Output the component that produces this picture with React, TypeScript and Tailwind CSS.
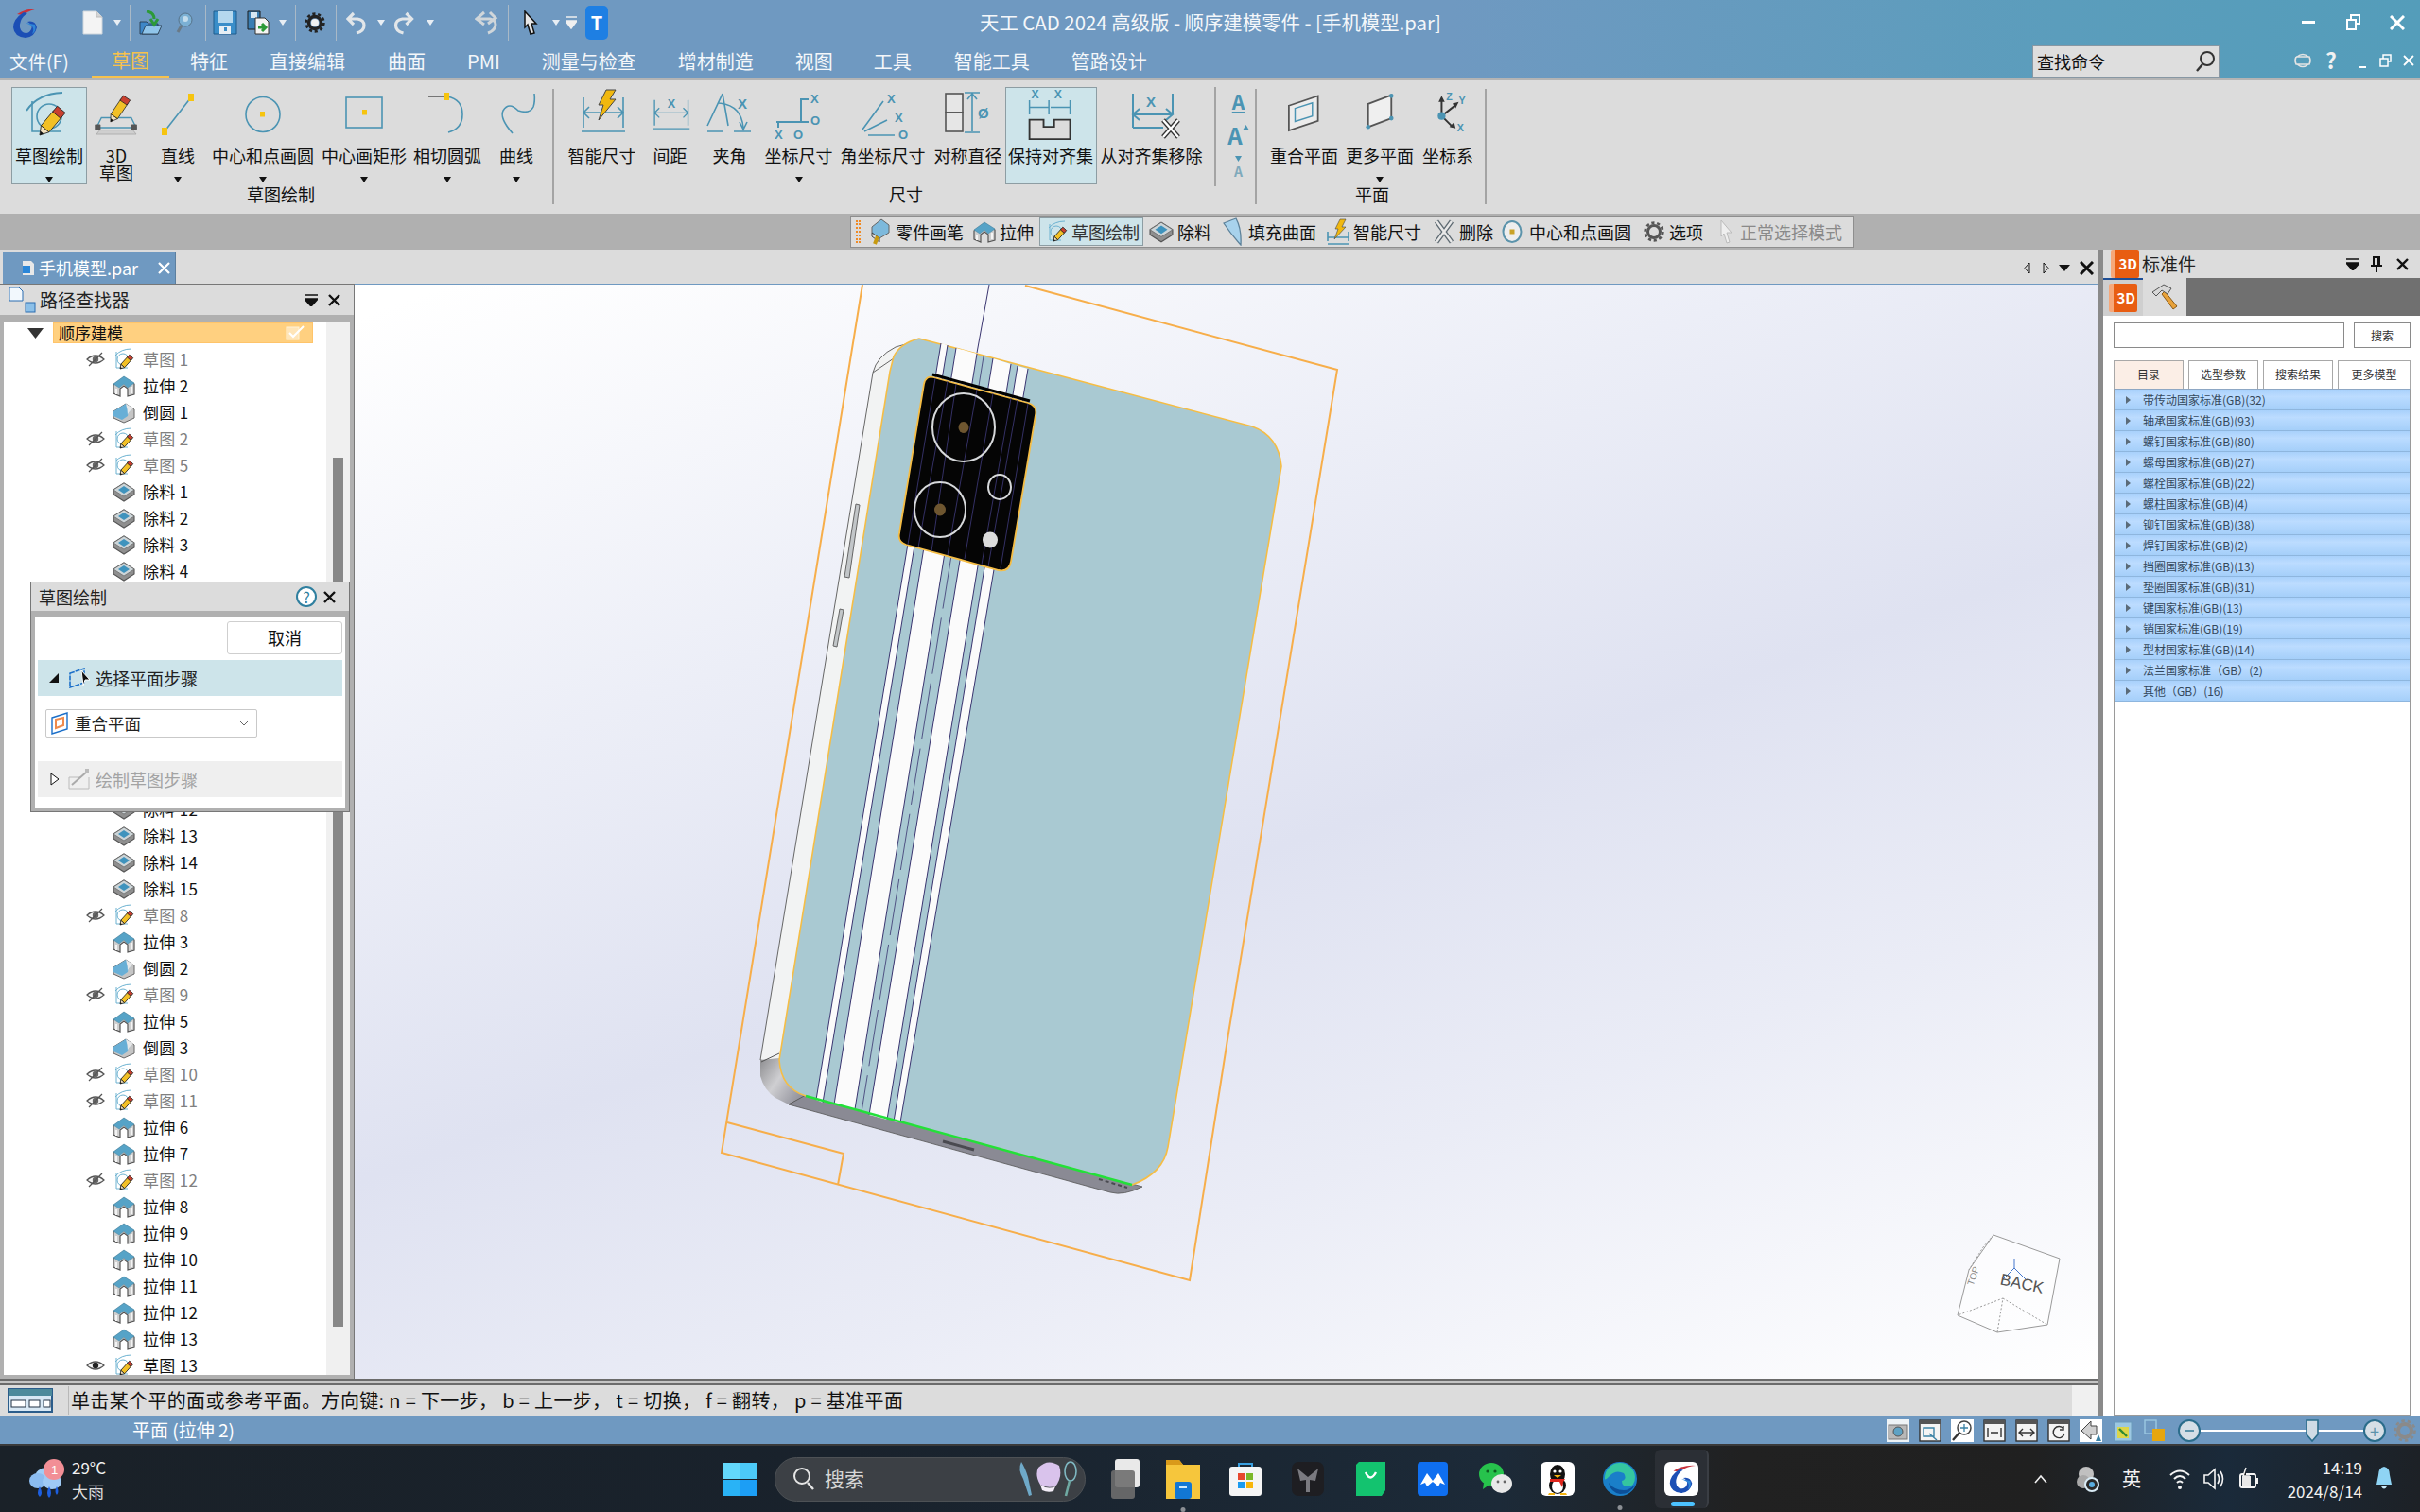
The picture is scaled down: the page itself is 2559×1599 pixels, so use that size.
import React from "react";

const B = "#4b94b3";
const Y = "#f6c40f";

function Pencil({ x, y, l = 26, w = 4, r = 38 }: { x: number; y: number; l?: number; w?: number; r?: number }) {
  return (
    <g transform={`translate(${x} ${y}) rotate(${r})`}>
      <polygon points={`0,0 ${-w},${-w * 1.6} ${w},${-w * 1.6}`} fill="#f3e2c0" stroke="#222" strokeWidth="0.8" />
      <polygon points={`0,0 ${-w * 0.4},${-w * 0.7} ${w * 0.4},${-w * 0.7}`} fill="#111" />
      <rect x={-w} y={-l} width={w * 2} height={l - w * 1.6} fill="#f2c026" stroke="#222" strokeWidth="0.8" />
      <rect x={-w} y={-l - w} width={w * 2} height={w * 1.4} fill="#c9402f" stroke="#222" strokeWidth="0.8" />
    </g>
  );
}

function ExtrudeIcon({ s = 24 }: { s?: number }) {
  return (
    <svg width={s} height={s} viewBox="0 0 24 24">
      <path d="M1 11 L12 3 L23 10 V21 L16 23 V15 L12 12 L8 15 V23 L1 20 Z" fill="#cfcfcf" stroke="#555" strokeWidth="1.2" />
      <path d="M1 10 L12 2 L23 9 L16 14 L12 10 L7 14 Z" fill="#56a3c7" stroke="#4f8aa5" strokeWidth="0.6" />
      <path d="M4 15 V21 M20 13 V20" stroke="#f4f4f4" strokeWidth="2" />
    </svg>
  );
}
function CutIcon({ s = 24 }: { s?: number }) {
  return (
    <svg width={s} height={s} viewBox="0 0 24 24">
      <path d="M1 10 L12 3 L23 10 V15 L12 22 L1 15 Z" fill="#8f8f8f" stroke="#555" strokeWidth="1.1" />
      <path d="M1 10 L12 3 L23 10 L12 17 Z" fill="#cdd5d8" stroke="#666" strokeWidth="0.7" />
      <path d="M6 10 L12 6 L18 10 L12 14 Z" fill="#3f93bd" />
    </svg>
  );
}
function RoundIcon({ s = 24 }: { s?: number }) {
  return (
    <svg width={s} height={s} viewBox="0 0 24 24">
      <path d="M1 11 L14 3 L23 9 V18 L12 23 L1 18 Z" fill="#c5c5c5" stroke="#666" strokeWidth="1" />
      <path d="M1 11 L14 3 L21 8 Q17 11 16 16 L10 20 L1 16 Z" fill="#68afd6" />
      <path d="M14 3 L22 8 Q17 11 16 15 Q16 9 14 3" fill="#e8e8e8" />
    </svg>
  );
}
function SketchMini({ s = 24 }: { s?: number }) {
  return (
    <svg width={s} height={s} viewBox="0 0 24 24">
      <path d="M3 8 Q9 1 20 1 M4 4 V21 H16" fill="none" stroke="#6cb2d1" strokeWidth="1" />
      <circle cx="11" cy="12" r="6" fill="none" stroke="#6cb2d1" strokeWidth="1" />
      <Pencil x={8} y={22} l={15} w={2.6} r={42} />
    </svg>
  );
}
function EyeIcon({ off = true }: { off?: boolean }) {
  return (
    <svg width="20" height="16" viewBox="0 0 20 16">
      <path d="M1 8 Q10 0 19 8 Q10 16 1 8 Z" fill="#f4f4f4" stroke="#555" strokeWidth="1.2" />
      <circle cx="10" cy="8" r="3.2" fill={off ? "#666" : "#222"} />
      {off && <path d="M3 15 L17 1" stroke="#555" strokeWidth="1.2" />}
    </svg>
  );
}
function AppLogo({ s = 34 }: { s?: number }) {
  return (
    <svg width={s} height={s} viewBox="0 0 34 34">
      <path d="M8 8 Q18 1 33 2 Q22 3 14 9 Z" fill="#c8323c" />
      <path d="M15 6 Q4 13 4 22 Q5 32 17 33 Q27 32 29 22 Q27 14 19 16 Q25 19 23 24 Q20 30 14 27 Q9 23 12 15 Q14 10 19 7 Z" fill="#1c4fb5" />
      <path d="M17 17 L27 19 Q29 26 24 29 Q27 23 23 20 Z" fill="#2f86d8" />
    </svg>
  );
}
function Caret({ dark = true }: { dark?: boolean }) {
  return (
    <svg width="8" height="6" viewBox="0 0 8 6">
      <path d="M0 0 H8 L4 6 Z" fill={dark ? "#111" : "#e8eef4"} />
    </svg>
  );
}

function RibbonIcon({ name }: { name: string }) {
  const t = { fill: B, fontSize: 13, fontFamily: "Liberation Sans, sans-serif", fontWeight: 700 } as const;
  const c = "0 0 64 56";
  const st = { fill: "none", stroke: B, strokeWidth: 1.6 } as const;
  switch (name) {
    case "sketch":
      return (
        <svg width="60" height="52" viewBox="0 0 60 52">
          <path d="M6 22 Q18 4 44 3" {...st} strokeWidth={2} fill="none" />
          <path d="M12 12 V44 H42" {...st} />
          <circle cx="30" cy="28" r="13" {...st} />
          <Pencil x={20} y={48} l={30} w={5.5} r={40} />
        </svg>
      );
    case "sketch3d":
      return (
        <svg width="56" height="50" viewBox={c}>
          <path d="M14 32 H50 L56 44 H8 Z" fill="none" stroke={B} strokeWidth="1.6" />
          <rect x="6" y="40" width="7" height="7" rx="1" fill="#555" />
          <rect x="50" y="40" width="7" height="7" rx="1" fill="#555" />
          <path d="M8 52 H56 L52 47 H12 Z" fill="#cfcfcf" stroke="#aaa" />
          <Pencil x={25} y={37} l={30} w={5} r={34} />
        </svg>
      );
    case "line":
      return (
        <svg width="60" height="56" viewBox="0 0 60 56">
          <path d="M16 46 L44 10" stroke={B} strokeWidth="1.6" />
          <rect x="13" y="42" width="6" height="8" fill={Y} />
          <rect x="41" y="6" width="6" height="8" fill={Y} />
        </svg>
      );
    case "circle":
      return (
        <svg width="50" height="50" viewBox="0 0 50 50">
          <ellipse cx="25" cy="25" rx="18" ry="18.5" {...st} />
          <rect x="22" y="22" width="5" height="5.5" fill={Y} />
        </svg>
      );
    case "rect":
      return (
        <svg width="50" height="50" viewBox="0 0 50 50">
          <rect x="6" y="7" width="38" height="32" {...st} />
          <rect x="23" y="20" width="5" height="5.5" fill={Y} />
        </svg>
      );
    case "arc":
      return (
        <svg width="60" height="56" viewBox="0 0 60 56">
          <path d="M10 9 H30" stroke="#555" strokeWidth="1.5" />
          <path d="M30 9 Q46 12 46 28 Q46 43 31 47" {...st} />
          <rect x="27" y="5" width="5" height="8" fill={Y} />
        </svg>
      );
    case "curve":
      return (
        <svg width="60" height="56" viewBox="0 0 60 56">
          <path d="M26 48 Q12 32 16 24 Q22 14 32 24 Q44 28 48 20 Q50 14 49 6" {...st} />
        </svg>
      );
    case "smart":
      return (
        <svg width="64" height="56" viewBox={c}>
          <path d="M12 10 V42 M54 10 V42 M10 46 H56" {...st} />
          <path d="M12 26 H54 M18 20 L12 26 L18 32 M48 20 L54 26 L48 32" {...st} />
          <path d="M36 2 H46 L40 12 H46 L28 34 L33 18 H28 Z" fill="#f1b80f" stroke="#444" strokeWidth="1" />
        </svg>
      );
    case "space":
      return (
        <svg width="64" height="56" viewBox={c}>
          <path d="M12 10 V42 M54 10 V42 M10 46 H56 M12 26 H54 M18 20 L12 26 L18 32 M48 20 L54 26 L48 32" {...st} />
          <text x="28" y="20" {...t} fontSize="15">X</text>
        </svg>
      );
    case "angle":
      return (
        <svg width="64" height="56" viewBox={c}>
          <path d="M8 40 L24 6 M24 6 L30 40 M8 46 H24 M36 46 H54 M20 16 Q44 18 46 42 M42 36 L46 44 L50 36" {...st} />
          <text x="40" y="22" {...t} fontSize="15">X</text>
        </svg>
      );
    case "ord":
      return (
        <svg width="64" height="56" viewBox={c}>
          <path d="M8 36 H34 M34 36 V12 H42 M10 36 V42 M34 36 H42" {...st} strokeWidth={2} />
          <text x="44" y="16" {...t}>X</text>
          <text x="44" y="39" {...t}>O</text>
          <text x="6" y="54" {...t}>X</text>
          <text x="26" y="54" {...t}>O</text>
        </svg>
      );
    case "aord":
      return (
        <svg width="64" height="56" viewBox={c}>
          <path d="M10 44 L32 14 M12 46 L36 34 M16 50 H44" {...st} />
          <text x="36" y="16" {...t}>X</text>
          <text x="44" y="36" {...t}>X</text>
          <text x="48" y="54" {...t}>O</text>
        </svg>
      );
    case "sym":
      return (
        <svg width="64" height="56" viewBox={c}>
          <rect x="8" y="6" width="18" height="20" fill="#e6e6e6" stroke="#555" strokeWidth="1.6" />
          <rect x="8" y="26" width="18" height="20" fill="#e6e6e6" stroke="#555" strokeWidth="1.6" />
          <path d="M28 5 H44 M28 47 H44 M36 6 V46 M31 12 L36 6 L41 12" {...st} />
          <text x="42" y="32" {...t} fontSize="15">Ø</text>
        </svg>
      );
    case "keep":
      return (
        <svg width="60" height="56" viewBox="0 0 64 60">
          <text x="10" y="12" {...t}>X</text>
          <text x="36" y="12" {...t}>X</text>
          <path d="M8 14 V30 M30 14 V30 M54 14 V30 M8 22 H30 M32 22 H54" {...st} />
          <path d="M8 36 H24 V44 H36 V36 H54 V58 H8 Z" fill="#dcdcdc" stroke="#333" strokeWidth="2" />
        </svg>
      );
    case "remove":
      return (
        <svg width="64" height="56" viewBox={c}>
          <path d="M12 6 V42 M54 6 V28 M12 28 H54 M19 22 L12 28 L19 34 M47 22 L54 28 L47 34 M12 42 H44" {...st} strokeWidth={2} />
          <text x="26" y="20" {...t} fontSize="15">X</text>
          <path d="M44 34 L60 52 M60 34 L44 52" stroke="#333" strokeWidth="5" />
          <path d="M44 34 L60 52 M60 34 L44 52" stroke="#fff" strokeWidth="2.4" />
        </svg>
      );
    case "plane":
      return (
        <svg width="44" height="41" viewBox="0 0 60 56">
          <path d="M8 16 L50 2 V38 L8 52 Z" fill="#ececec" stroke="#555" strokeWidth="2.4" />
          <path d="M17 20 L42 12 V31 L17 39 Z" fill="none" stroke={B} strokeWidth="2" />
        </svg>
      );
    case "more":
      return (
        <svg width="46" height="43" viewBox="0 0 60 56">
          <path d="M14 14 L46 2 V34 L14 46 Z" fill="#efefef" stroke="#555" strokeWidth="2.4" />
          <circle cx="46" cy="3" r="3" fill={B} />
          <circle cx="46" cy="34" r="3" fill={B} />
          <circle cx="14" cy="46" r="3" fill={B} />
        </svg>
      );
    case "coord":
      return (
        <svg width="50" height="46" viewBox="0 0 60 56">
          <path d="M22 30 V8 M22 30 L40 16 M22 30 L36 44" stroke="#333" strokeWidth="2.4" />
          <path d="M18 12 L22 4 L26 12 Z M36 14 L44 12 L40 20 Z M32 44 L40 46 L38 38 Z" fill="#333" />
          <circle cx="22" cy="30" r="5" fill={B} />
          <text x="28" y="10" {...t}>Z</text>
          <text x="44" y="14" {...t}>Y</text>
          <text x="42" y="50" {...t}>X</text>
        </svg>
      );
    default:
      return null;
  }
}

type RB = { n: string; l: React.ReactNode; w: string; a?: boolean; active?: boolean };

const g1: RB[] = [
  { n: "sketch", l: "草图绘制", w: "w-[80px]", a: true, active: true },
  { n: "sketch3d", l: <>3D<br />草图</>, w: "w-[62px]" },
  { n: "line", l: "直线", w: "w-[68px]", a: true },
  { n: "circle", l: "中心和点画圆", w: "w-[112px]", a: true },
  { n: "rect", l: "中心画矩形", w: "w-[102px]", a: true },
  { n: "arc", l: "相切圆弧", w: "w-[74px]", a: true },
  { n: "curve", l: "曲线", w: "w-[72px]", a: true },
];
const g2a: RB[] = [
  { n: "smart", l: "智能尺寸", w: "w-[90px]" },
  { n: "space", l: "间距", w: "w-[54px]" },
  { n: "angle", l: "夹角", w: "w-[72px]" },
  { n: "ord", l: "坐标尺寸", w: "w-[74px]", a: true },
  { n: "aord", l: "角坐标尺寸", w: "w-[104px]" },
  { n: "sym", l: "对称直径", w: "w-[76px]" },
];
const g2b: RB[] = [
  { n: "keep", l: "保持对齐集", w: "w-[97px]", active: true },
  { n: "remove", l: "从对齐集移除", w: "w-[116px]" },
];
const g3: RB[] = [
  { n: "plane", l: "重合平面", w: "w-[86px]" },
  { n: "more", l: "更多平面", w: "w-[74px]", a: true },
  { n: "coord", l: "坐标系", w: "w-[70px]" },
];

function RibbonBtn({ b }: { b: RB }) {
  return (
    <div className={`${b.w} h-[103px] shrink-0 flex flex-col items-center ${b.active ? "bg-[#cde4ea] border border-[#8d9da3]" : ""}`}>
      <div className={`${b.active ? "h-[62px]" : "h-[63px]"} w-full flex items-center justify-center pb-[6px] shrink-0`}>
        <RibbonIcon name={b.n} />
      </div>
      <div className="h-[32px] text-[18px] leading-[18px] text-center text-[#111] whitespace-nowrap shrink-0">{b.l}</div>
      {b.a && <Caret />}
    </div>
  );
}

const RSep = () => <div className="w-[2px] h-[122px] mt-[2px] bg-[#a4a4a4] shrink-0" />;

const menus: [string, string][] = [
  ["特征", "ml-[22px]"],
  ["直接编辑", "ml-[44px]"],
  ["曲面", "ml-[45px]"],
  ["PMI", "ml-[44px]"],
  ["测量与检查", "ml-[44px]"],
  ["增材制造", "ml-[44px]"],
  ["视图", "ml-[44px]"],
  ["工具", "ml-[43px]"],
  ["智能工具", "ml-[45px]"],
  ["管路设计", "ml-[44px]"],
];

function QatSep({ cls }: { cls: string }) {
  return <div className={`${cls} w-px h-[38px] bg-[#a9b9c7] shrink-0`} />;
}

function TitleBar() {
  return (
    <div className="h-[83px] bg-[linear-gradient(90deg,#6f99c1_0%,#6f99c1_60%,#5b9dbc_85%,#549dba_100%)] text-white shrink-0 flex flex-col">
      <div className="h-[47px] flex items-center relative">
        <div className="ml-[10px] w-[34px] shrink-0"><AppLogo /></div>
        <svg className="ml-[43px] shrink-0" width="22" height="26" viewBox="0 0 22 26"><path d="M1 1 H15 L21 7 V25 H1 Z" fill="#f4f4f4" stroke="#cfd6dc" /><path d="M15 1 V7 H21" fill="#d5d5d5" stroke="#bbb" /></svg>
        <div className="ml-[11px]"><Caret dark={false} /></div>
        <QatSep cls="ml-[9px]" />
        <svg className="ml-[9px] shrink-0" width="24" height="26" viewBox="0 0 24 26"><path d="M1 12 H8 L10 14 H20 V25 H1 Z" fill="#3e87c8" stroke="#234" strokeWidth=".8" /><path d="M3 25 L7 16 H24 L20 25 Z" fill="#90c5ea" stroke="#234" strokeWidth=".8" /><path d="M8 1 Q16 2 16 9 M12 9 L16 15 L20 9" fill="none" stroke="#2c9a38" strokeWidth="3" /></svg>
        <svg className="ml-[15px] shrink-0" width="18" height="24" viewBox="0 0 18 24"><circle cx="10" cy="9" r="7" fill="#7bb0d4" stroke="#56738a" /><path d="M6 15 L2 22" stroke="#6a7a86" strokeWidth="3" /><circle cx="10" cy="8" r="3" fill="#c3dcec" /></svg>
        <QatSep cls="ml-[13px]" />
        <svg className="ml-[7px] shrink-0" width="26" height="26" viewBox="0 0 26 26"><path d="M1 1 H25 V25 H1 Z" fill="#3a8ec9" stroke="#1e5c8d" /><rect x="5" y="1" width="16" height="12" fill="#b5d8ee" /><rect x="7" y="16" width="12" height="9" fill="#e6eef4" /><rect x="12" y="18" width="3" height="4" fill="#3a8ec9" /></svg>
        <svg className="ml-[10px] shrink-0" width="24" height="26" viewBox="0 0 24 26"><path d="M1 1 H14 V20 H1 Z" fill="#3a7eb3" stroke="#1d1d1d" /><rect x="4" y="2" width="7" height="6" fill="#d7e8f3" /><path d="M9 8 H19 L23 12 V25 H9 Z" fill="#f4f4f4" stroke="#333" /><path d="M12 18 H19 M16 14 L20 18 L16 22" fill="none" stroke="#2c9a38" strokeWidth="3" /></svg>
        <div className="ml-[10px]"><Caret dark={false} /></div>
        <QatSep cls="ml-[9px]" />
        <svg className="ml-[9px] shrink-0" width="22" height="24" viewBox="0 0 22 24"><circle cx="11" cy="12" r="6.5" fill="none" stroke="#222" strokeWidth="3.4" /><circle cx="11" cy="12" r="9.4" fill="none" stroke="#222" strokeWidth="2.6" strokeDasharray="3.2 2.7" /><circle cx="11" cy="12" r="4" fill="#f0f0f0" /></svg>
        <QatSep cls="ml-[11px]" />
        <svg className="ml-[10px] shrink-0" width="21" height="26" viewBox="0 0 21 26"><path d="M8 3 L2 9 L8 15 M3 9 H12 Q19 10 19 16 Q19 22 11 24" fill="none" stroke="#e2e6e9" strokeWidth="3.2" /></svg>
        <div className="ml-[12px]"><Caret dark={false} /></div>
        <svg className="ml-[9px] shrink-0" width="22" height="26" viewBox="0 0 21 26"><path d="M13 3 L19 9 L13 15 M18 9 H9 Q2 10 2 16 Q2 22 10 24" fill="none" stroke="#e2e6e9" strokeWidth="3.2" /></svg>
        <div className="ml-[13px]"><Caret dark={false} /></div>
        <svg className="ml-[43px] shrink-0" width="25" height="26" viewBox="0 0 25 26"><path d="M10 2 L2 9 L10 15 M3 9 H16 Q22 10 22 15 Q22 21 14 24 M16 2 L22 8 L14 14" fill="none" stroke="#d0d6da" strokeWidth="3" /></svg>
        <QatSep cls="ml-[10px]" />
        <svg className="ml-[15px] shrink-0" width="16" height="26" viewBox="0 0 16 26"><path d="M2 1 L14 14 H9 L12 24 L8 25 L5 15 L2 18 Z" fill="#e8e8e8" stroke="#111" strokeWidth="1.5" /></svg>
        <div className="ml-[15px]"><Caret dark={false} /></div>
        <svg className="ml-[6px] shrink-0" width="12" height="14" viewBox="0 0 12 14"><path d="M0 1 H12 M0 5 H12 L6 13 L0 5" fill="#f0f0f0" stroke="#f0f0f0" strokeWidth="1.5" /></svg>
        <div className="ml-[9px] w-[24px] h-[36px] rounded-[5px] bg-[#1e7fe3] text-white text-[20px] font-bold flex items-center justify-center shrink-0">T</div>
        <div className="absolute left-[1036px] top-[10px] text-[20.4px] leading-[26px] text-[#f4f7fa] whitespace-nowrap">天工 CAD 2024 高级版 - 顺序建模零件 - [手机模型.par]</div>
        <div className="ml-auto flex items-center shrink-0">
          <div className="w-[14px] h-[3px] bg-white" />
          <svg className="ml-[33px]" width="15" height="17" viewBox="0 0 15 17"><rect x="5" y="1" width="9" height="9" fill="none" stroke="#fff" strokeWidth="2" /><rect x="1" y="6" width="9" height="10" fill="#5b9dbc" stroke="#fff" strokeWidth="2" /></svg>
          <svg className="ml-[31px] mr-[16px]" width="16" height="16" viewBox="0 0 16 16"><path d="M1 1 L15 15 M15 1 L1 15" stroke="#fff" strokeWidth="3" /></svg>
        </div>
      </div>
      <div className="h-[36px] flex items-center text-[20px] text-[#f4f7fa] whitespace-nowrap relative">
        <span className="ml-[10px] w-[87px] text-[19.5px]">文件(F)</span>
        <span className="w-[82px] h-[36px] leading-[34px] text-center text-[#f6c24d] border-b-[3px] border-[#f6c24d]">草图</span>
        {menus.map(([m, c]) => (
          <span key={m} className={c}>{m}</span>
        ))}
        <div className="ml-auto mr-[212px] w-[198px] h-[34px] bg-[#dedede] border border-[#8797a3] flex items-center text-[#111] text-[18px] pl-[4px]">
          查找命令
          <svg className="ml-auto mr-[3px]" width="22" height="24" viewBox="0 0 22 24"><circle cx="13" cy="9" r="7" fill="none" stroke="#333" strokeWidth="2" /><path d="M8 15 L2 22" stroke="#333" strokeWidth="2.4" /></svg>
        </div>
        <div className="absolute right-0 top-0 h-[36px] w-[150px]">
          <svg className="absolute left-[16px] top-[6px]" width="20" height="22" viewBox="0 0 20 22"><path d="M4 7 Q10 2 16 7 M3 7 H17 Q19 11 17 15 H3 Q1 11 3 7 M4 15 Q10 20 16 15" fill="none" stroke="#e4e4e4" strokeWidth="1.6" /></svg>
          <span className="absolute left-[50px] top-[2px] text-[23px] leading-[28px] text-[#f2f2f2] font-bold">?</span>
          <div className="absolute left-[85px] top-[23px] w-[8px] h-[2px] bg-white" />
          <svg className="absolute left-[107px] top-[10px]" width="13" height="14" viewBox="0 0 13 14"><rect x="4" y="1" width="8" height="7" fill="none" stroke="#fff" strokeWidth="1.5" /><rect x="1" y="5" width="8" height="8" fill="#549dba" stroke="#fff" strokeWidth="1.5" /></svg>
          <svg className="absolute left-[132px] top-[11px]" width="12" height="12" viewBox="0 0 12 12"><path d="M1 1 L11 11 M11 1 L1 11" stroke="#fff" strokeWidth="1.8" /></svg>
        </div>
      </div>
    </div>
  );
}

function Ribbon() {
  return (
    <div className="h-[143px] shrink-0 bg-[#dcdcdc] border-t-2 border-[#b4b4b4] flex pt-[7px] pl-[12px]">
      <div className="flex flex-col items-center w-[570px] shrink-0">
        <div className="flex h-[103px]">{g1.map((b) => <RibbonBtn key={b.n} b={b} />)}</div>
        <div className="text-[18px] leading-[20px] text-[#111]">草图绘制</div>
      </div>
      <div className="ml-[2px]"><RSep /></div>
      <div className="ml-[3px] flex flex-col items-center w-[738px] shrink-0">
        <div className="flex h-[103px]">
          {g2a.map((b) => <RibbonBtn key={b.n} b={b} />)}
          <div className="ml-[1px] flex">{g2b.map((b) => <RibbonBtn key={b.n} b={b} />)}</div>
          <div className="ml-[8px] w-[2px] h-[105px] bg-[#a4a4a4]" />
          <div className="ml-[9px] w-[30px] h-[103px] flex flex-col items-center text-[#4b94b3] font-bold leading-none">
            <span className="h-[22px] mt-[5px] text-[21px] underline">A</span>
            <div className="mt-[12px] h-[24px] flex items-start">
              <span className="text-[24px] leading-none">A</span>
              <svg className="mt-[1px]" width="7" height="6" viewBox="0 0 7 6"><path d="M0 6 H7 L3.5 0 Z" fill="#4b94b3" /></svg>
            </div>
            <svg className="mt-[10px]" width="7" height="6" viewBox="0 0 7 6"><path d="M0 0 H7 L3.5 6 Z" fill="#4b94b3" /></svg>
            <span className="mt-[3px] h-[14px] text-[14px] text-[#7fa9bb]">A</span>
          </div>
        </div>
        <div className="text-[18px] leading-[20px] text-[#111]">尺寸</div>
      </div>
      <RSep />
      <div className="ml-[7px] flex flex-col items-center w-[230px] shrink-0">
        <div className="flex h-[103px]">{g3.map((b) => <RibbonBtn key={b.n} b={b} />)}</div>
        <div className="text-[18px] leading-[20px] text-[#111]">平面</div>
      </div>
      <div className="ml-[4px]"><RSep /></div>
    </div>
  );
}

function ToolBand() {
  const T = ({ c, t, g = false }: { c: string; t: string; g?: boolean }) => (
    <span className={`${c} ${g ? "text-[#8a8a8a]" : "text-[#111]"} whitespace-nowrap`}>{t}</span>
  );
  return (
    <div className="h-[38px] shrink-0 bg-[#b0b0b0] pl-[899px] pt-[2px]">
      <div className="w-[1061px] h-[34px] bg-[#dcdcdc] border border-[#8e8e8e] flex items-center text-[18px]">
        <div className="ml-[5px] w-[5px] h-[24px] border-x-2 border-dotted border-[#f08a24] shrink-0" />
        <svg className="ml-[8px] shrink-0" width="24" height="30" viewBox="0 0 24 30"><path d="M4 10 L14 2 L22 8 V16 L12 22 L4 16 Z" fill="#7db9dc" stroke="#666" /><path d="M4 16 L12 22 V26 L4 20 Z" fill="#ddd" stroke="#444" /><path d="M7 28 L10 20" stroke="#c79a10" strokeWidth="4" /></svg>
        <T c="ml-[5px]" t="零件画笔" />
        <div className="ml-[10px] shrink-0"><ExtrudeIcon s={24} /></div>
        <T c="ml-[4px]" t="拉伸" />
        <div className="ml-[6px] w-[110px] h-[30px] bg-[#cde4ea] border border-[#8d9da3] flex items-center pl-[6px] shrink-0">
          <SketchMini s={24} />
          <T c="ml-[3px] !text-[#333]" t="草图绘制" />
        </div>
        <div className="ml-[6px] shrink-0"><CutIcon s={26} /></div>
        <T c="ml-[4px]" t="除料" />
        <svg className="ml-[11px] shrink-0" width="22" height="30" viewBox="0 0 22 30"><path d="M2 6 Q12 2 15 1 Q21 12 20 29 Q10 18 2 6 Z" fill="#a8d2ec" stroke="#5d8199" strokeWidth="1.3" /></svg>
        <T c="ml-[6px]" t="填充曲面" />
        <svg className="ml-[10px] shrink-0" width="26" height="28" viewBox="0 0 26 28"><path d="M2 14 V24 M24 14 V24 M2 27 H24 M2 20 H24" stroke={B} strokeWidth="1.6" /><path d="M15 1 H21 L17 9 H21 L9 22 L13 11 H10 Z" fill="#f1b80f" stroke="#444" strokeWidth=".6" /></svg>
        <T c="ml-[3px]" t="智能尺寸" />
        <svg className="ml-[13px] shrink-0" width="22" height="26" viewBox="0 0 22 26"><path d="M3 2 L19 24 M19 2 L3 24" stroke="#5e6a72" strokeWidth="5" /><path d="M3 2 L19 24 M19 2 L3 24" stroke="#e8e8e8" strokeWidth="2.4" /></svg>
        <T c="ml-[5px]" t="删除" />
        <svg className="ml-[9px] shrink-0" width="22" height="26" viewBox="0 0 22 26"><ellipse cx="11" cy="13" rx="9.5" ry="11" fill="#eee" stroke="#5b93ab" strokeWidth="2" /><rect x="8.5" y="10.5" width="5" height="5" fill="#c9a227" /></svg>
        <T c="ml-[7px]" t="中心和点画圆" />
        <svg className="ml-[13px] shrink-0" width="22" height="26" viewBox="0 0 22 24"><circle cx="11" cy="12" r="6.5" fill="none" stroke="#555" strokeWidth="3" /><circle cx="11" cy="12" r="9.4" fill="none" stroke="#555" strokeWidth="2.6" strokeDasharray="3.2 2.7" /></svg>
        <T c="ml-[5px]" t="选项" />
        <svg className="ml-[17px] shrink-0" width="15" height="26" viewBox="0 0 15 26"><path d="M2 1 L13 14 H8 L11 24 L8 25 L5 15 L2 18 Z" fill="#efefef" stroke="#bbb" /></svg>
        <T c="ml-[7px]" t="正常选择模式" g />
      </div>
    </div>
  );
}

type Row = { t: string; k: "s" | "e" | "r" | "c"; on?: boolean };
const rows: Row[] = [
  { t: "草图 1", k: "s" }, { t: "拉伸 2", k: "e" }, { t: "倒圆 1", k: "r" }, { t: "草图 2", k: "s" }, { t: "草图 5", k: "s" },
  { t: "除料 1", k: "c" }, { t: "除料 2", k: "c" }, { t: "除料 3", k: "c" }, { t: "除料 4", k: "c" }, { t: "除料 5", k: "c" },
  { t: "除料 6", k: "c" }, { t: "除料 7", k: "c" }, { t: "除料 8", k: "c" }, { t: "除料 9", k: "c" }, { t: "除料 10", k: "c" },
  { t: "除料 11", k: "c" }, { t: "草图 7", k: "s" }, { t: "除料 12", k: "c" }, { t: "除料 13", k: "c" }, { t: "除料 14", k: "c" },
  { t: "除料 15", k: "c" }, { t: "草图 8", k: "s" }, { t: "拉伸 3", k: "e" }, { t: "倒圆 2", k: "r" }, { t: "草图 9", k: "s" },
  { t: "拉伸 5", k: "e" }, { t: "倒圆 3", k: "r" }, { t: "草图 10", k: "s" }, { t: "草图 11", k: "s" }, { t: "拉伸 6", k: "e" },
  { t: "拉伸 7", k: "e" }, { t: "草图 12", k: "s" }, { t: "拉伸 8", k: "e" }, { t: "拉伸 9", k: "e" }, { t: "拉伸 10", k: "e" },
  { t: "拉伸 11", k: "e" }, { t: "拉伸 12", k: "e" }, { t: "拉伸 13", k: "e" }, { t: "草图 13", k: "s", on: true },
];

function Dialog() {
  return (
    <div className="absolute left-[32px] top-[314px] w-[338px] h-[244px] bg-[#b0b0b0] border border-[#777] flex flex-col">
      <div className="h-[30px] bg-[#dcdcdc] flex items-center pl-[8px] text-[18px] text-[#222] shrink-0">
        草图绘制
        <div className="ml-auto w-[22px] h-[22px] rounded-full border-2 border-[#2f7f9f] bg-white text-[#2f7f9f] text-[16px] leading-[18px] text-center">?</div>
        <svg className="ml-[7px] mr-[14px]" width="13" height="13" viewBox="0 0 13 13"><path d="M1 1 L12 12 M12 1 L1 12" stroke="#111" strokeWidth="2.4" /></svg>
      </div>
      <div className="mx-[4px] mt-[7px] mb-[4px] flex-1 bg-white flex flex-col px-[3px]">
        <div className="self-end w-[122px] h-[35px] mt-[4px] mr-0 bg-white border border-[#cfcfcf] rounded-[3px] text-[18px] text-center leading-[33px] text-[#111]">取消</div>
        <div className="mt-[6px] h-[38px] bg-[#cde4ea] flex items-center text-[18px] text-[#222]">
          <svg className="ml-[12px]" width="11" height="11" viewBox="0 0 11 11"><path d="M10 0 V10 H0 Z" fill="#111" /></svg>
          <svg className="ml-[9px]" width="24" height="22" viewBox="0 0 24 22"><path d="M2 6 L17 1 V16 L2 21 Z" fill="none" stroke="#1b6fc9" strokeWidth="1.6" strokeDasharray="5 1" /><path d="M14 3 L23 13 H18 L16 19 Z" fill="#111" stroke="#fff" /></svg>
          <span className="ml-[5px]">选择平面步骤</span>
        </div>
        <div className="ml-[8px] mt-[14px] w-[224px] h-[30px] bg-white border border-[#c9c9c9] rounded-[2px] flex items-center text-[17.5px] text-[#222]">
          <svg className="ml-[5px]" width="18" height="24" viewBox="0 0 18 24"><path d="M1 6 L17 1 V18 L1 23 Z" fill="none" stroke="#1b6fc9" strokeWidth="1.4" /><path d="M5 8 L13 6 V14 L5 17 Z" fill="none" stroke="#f08a4b" strokeWidth="2" /></svg>
          <span className="ml-[7px]">重合平面</span>
          <svg className="ml-auto mr-[7px]" width="12" height="8" viewBox="0 0 12 8"><path d="M1 1 L6 6 L11 1" fill="none" stroke="#666" /></svg>
        </div>
        <div className="mt-[25px] h-[38px] bg-[#efefef] flex items-center text-[18px] text-[#a3a3a3]">
          <svg className="ml-[13px]" width="10" height="14" viewBox="0 0 10 14"><path d="M1 1 L9 7 L1 13 Z" fill="#fff" stroke="#111" /></svg>
          <svg className="ml-[9px]" width="24" height="24" viewBox="0 0 24 24"><path d="M1 10 H14 M1 10 V22 H22 V10" fill="none" stroke="#bbb" /><path d="M4 18 L20 4" stroke="#aaa" strokeWidth="2" /><rect x="18" y="1" width="4" height="4" fill="#bbb" /></svg>
          <span className="ml-[5px]">绘制草图步骤</span>
        </div>
      </div>
    </div>
  );
}

function Finder() {
  return (
    <div className="relative w-[375px] h-[1158px] shrink-0 bg-[#dcdcdc] border-t border-[#777] border-r border-r-[#777] flex flex-col">
      <div className="h-[32px] flex items-center shrink-0 pl-[9px]">
        <svg width="30" height="28" viewBox="0 0 30 28"><path d="M1 1 H11 L15 5 V15 H1 Z" fill="#f2f8fd" stroke="#2a6db0" /><rect x="18" y="17" width="10" height="10" fill="#8cc0e8" stroke="#2a6db0" /></svg>
        <span className="ml-[3px] text-[19px] text-[#222]">路径查找器</span>
        <svg className="ml-auto" width="14" height="13" viewBox="0 0 14 13"><path d="M0 1 H14 M0 5 H14 L7 13 Z" fill="#111" stroke="#111" strokeWidth="1.5" /></svg>
        <svg className="ml-[11px] mr-[14px]" width="13" height="13" viewBox="0 0 13 13"><path d="M1 1 L12 12 M12 1 L1 12" stroke="#111" strokeWidth="2.4" /></svg>
      </div>
      <div className="flex-1 min-h-0 bg-[#b0b0b0] pt-[7px] pl-[4px] pr-[4px] pb-[4px] flex">
        <div className="w-[341px] bg-white overflow-hidden shrink-0">
          <div className="h-[26px] flex items-center pb-[2px]">
            <svg className="ml-[25px] shrink-0" width="17" height="11" viewBox="0 0 17 11"><path d="M0 0 H17 L8.5 11 Z" fill="#333" /></svg>
            <div className="ml-[10px] w-[275px] h-[22px] bg-[#ffd080] border border-[#ffc46a] flex items-center pl-[5px] text-[17px] text-[#111]">
              顺序建模
              <svg className="ml-auto mr-[8px]" width="20" height="16" viewBox="0 0 20 16"><rect x="1" y="2" width="13" height="13" fill="#ffe5b8" stroke="#fff2d8" /><path d="M4 8 L8 12 L19 1" fill="none" stroke="#fff" strokeWidth="2" /></svg>
            </div>
          </div>
          {rows.map((r) => (
            <div key={r.t} className="h-[28px] flex items-center">
              <div className="ml-[87px] w-[20px] shrink-0">{r.k === "s" && <EyeIcon off={!r.on} />}</div>
              <div className="ml-[8px] w-[24px] shrink-0">
                {r.k === "s" ? <SketchMini /> : r.k === "e" ? <ExtrudeIcon /> : r.k === "r" ? <RoundIcon /> : <CutIcon />}
              </div>
              <span className={`ml-[8px] text-[17px] tracking-[0.3px] whitespace-pre ${r.k === "s" && !r.on ? "text-[#808080]" : "text-[#111]"}`}>{r.t}</span>
            </div>
          ))}
        </div>
        <div className="flex-1 bg-[#f0f0f0] pl-[7px] pt-[144px]">
          <div className="w-[11px] h-[919px] bg-[#888]" />
        </div>
      </div>
      <Dialog />
    </div>
  );
}

function Model() {
  const O = "#f7ae4a";
  const L = "#3a3570";
  return (
    <svg className="w-full h-full block" viewBox="375 300 1843 1157">
      <defs>
        <linearGradient id="corner" x1="0" y1="0" x2="1" y2="0.6">
          <stop offset="0" stopColor="#8d8d90" />
          <stop offset="0.45" stopColor="#cfcfd2" />
          <stop offset="1" stopColor="#8a8a94" />
        </linearGradient>
      </defs>
      <path d="M912 300 L763 1218 L1258 1353 L1299 1092 L1414 390 L1084 301" fill="none" stroke={O} strokeWidth="2" />
      <path d="M769 1186 L892 1219 L886 1252" fill="none" stroke={O} strokeWidth="2" />
      <path d="M923 393 Q927 376 947 366 L975 358 L946 392 L826 1124 L804 1120 Z" fill="#f2f3f3" stroke="#666" strokeWidth="1" />
      <path d="M923 393 L945 378" stroke="#666" strokeWidth="1" />
      <path d="M804 1120 V1137 Q808 1152 820 1160 L834 1167 L860 1160 L836 1148 Q826 1138 824 1118 Z" fill="url(#corner)" />
      <path d="M805 1122 L824 1113 M834 1167 L852 1158" stroke="#555" strokeWidth="1" />
      <path d="M834 1167 L1174 1260 Q1188 1264 1208 1254 L1197 1251 L852 1157 Z" fill="#8a8a94" stroke="#555" strokeWidth="0.8" />
      <path d="M997 1206 L1030 1215" stroke="#4a4a50" strokeWidth="3" />
      <path d="M1162 1246 L1192 1255" stroke="#4a4a50" strokeWidth="2" strokeDasharray="4 3" />
      <path d="M905 532 L909 533 L898 610 L893 609 Z" fill="#c2c6c8" stroke="#666" />
      <path d="M888 643 L892 644 L885 683 L881 682 Z" fill="#c2c6c8" stroke="#666" />
      <path d="M941 392 L945 376 Q952 362 972 357 L1324 450 Q1352 460 1355 492 L1235 1212 Q1230 1240 1197 1252 L852 1158 Q826 1150 824 1120 Z" fill="#a9c9d2" stroke="#f5bd45" strokeWidth="1.6" />
      <g fill="#fbfbfb">
        <path d="M995 362 L1002 364 L870 1165 L863 1162 Z" />
        <path d="M1011 367 L1033 373 L904 1172 L882 1167 Z" />
        <path d="M1050 378 L1069 384 L938 1183 L919 1178 Z" />
        <path d="M1076 386 L1087 389 L952 1186 L945 1185 Z" />
      </g>
      <g stroke={L} strokeWidth="1">
        <path d="M995 362 L863 1162 M1002 364 L870 1165 M1011 367 L882 1167 M1033 373 L904 1172 M1050 378 L919 1178 M1069 384 L938 1183 M1076 386 L945 1185 M1087 389 L952 1186" />
        <path d="M1046 300 L1033 372" />
        <path d="M1040 376 L911 1175" strokeDasharray="60 10" strokeWidth="0.8" />
      </g>
      <path d="M852 1158 L1197 1252" stroke="#22e03a" strokeWidth="2.4" />
      <path d="M987 398 L1087 425 Q1097 428 1095 438 L1069 593 Q1067 604 1056 602 L958 575 Q949 572 951 563 L977 405 Q979 396 987 398 Z" fill="#050505" stroke="#f5bd45" strokeWidth="1.8" />
      <path d="M986 395 L1089 423" stroke="#000" strokeWidth="3" />
      <g stroke={L} strokeWidth="0.9">
        <path d="M989 399 L960 575 M1002 402 L971 578 M1011 405 L985 582 M1033 411 L1002 586 M1050 415 L1020 590 M1069 420 L1038 596 M1076 422 L1045 598 M1087 426 L1058 600" />
      </g>
      <g fill="none" stroke="#d7d9db" strokeWidth="2">
        <ellipse cx="1019" cy="451" rx="33" ry="36" />
        <ellipse cx="994" cy="538" rx="27" ry="29" />
        <ellipse cx="1057" cy="514" rx="12" ry="13" />
      </g>
      <ellipse cx="1019" cy="451" rx="5.5" ry="6" fill="#6e5630" />
      <ellipse cx="994" cy="538" rx="6" ry="6.5" fill="#6e5630" />
      <ellipse cx="1047" cy="570" rx="8" ry="8.5" fill="#dcdcdc" />
      <g fill="none" stroke="#9a9a9a" strokeWidth="1">
        <path d="M2108 1305 L2178 1330 L2165 1400 L2112 1408 L2070 1390 L2082 1342 Z" fill="#ffffff" fillOpacity="0.55" />
        <path d="M2108 1305 L2097 1318 L2082 1342 M2112 1408 L2118 1372 L2070 1390" strokeDasharray="2 2" />
        <path d="M2118 1372 L2165 1400" strokeDasharray="2 2" />
      </g>
      <path d="M2130 1340 V1330 M2130 1340 L2118 1352 M2130 1340 L2142 1352" stroke="#4477cc" strokeWidth="1" />
      <text x="2115" y="1362" fontSize="17" fill="#555" fontFamily="Liberation Sans, sans-serif" transform="rotate(12 2137 1356)">BACK</text>
      <text x="2080" y="1358" fontSize="10" fill="#888" fontFamily="Liberation Sans, sans-serif" transform="rotate(-70 2084 1354)">TOP</text>
    </svg>
  );
}

const sbIcons = ["cam", "a", "zoom", "b", "c", "d", "e", "f", "g"];
function SbIcon({ n }: { n: string }) {
  if (n === "cam")
    return (
      <svg width="24" height="24" viewBox="0 0 24 24"><rect width="24" height="24" fill="#eef3f6" /><rect x="2" y="6" width="20" height="15" fill="#b8b8b8" stroke="#777" /><circle cx="12" cy="13" r="5" fill="#5ea2c4" stroke="#555" /></svg>
    );
  if (n === "zoom")
    return (
      <svg width="24" height="24" viewBox="0 0 24 24"><rect width="24" height="24" fill="#fff" /><circle cx="14" cy="9" r="7" fill="#fff" stroke="#444" strokeWidth="1.5" /><path d="M14 5 V13 M10 9 H18" stroke="#3b82a5" strokeWidth="1.3" /><path d="M9 14 L2 22" stroke="#333" strokeWidth="2.4" /></svg>
    );
  if (n === "f")
    return (
      <svg width="24" height="24" viewBox="0 0 24 24"><rect x="3" y="3" width="18" height="20" fill="#9cc8e2" stroke="#6a9abb" /><rect x="6" y="8" width="12" height="12" fill="#ddd64a" /><path d="M8 10 L16 18" stroke="#2f8a34" strokeWidth="2.4" /></svg>
    );
  if (n === "g")
    return (
      <svg width="24" height="24" viewBox="0 0 24 24"><rect x="1" y="1" width="12" height="14" fill="none" stroke="#9cc8e2" strokeWidth="1.4" /><rect x="9" y="10" width="13" height="13" fill="#e6a60f" /></svg>
    );
  if (n === "e")
    return (
      <svg width="24" height="24" viewBox="0 0 24 24"><rect width="24" height="24" fill="#fff" /><path d="M2 12 L12 2 V7 H18 V16 H12 V21 Z" fill="#d0d0d0" stroke="#444" /><path d="M20 16 L23 23 H17 Z" fill="#3b82a5" /></svg>
    );
  return (
    <svg width="24" height="24" viewBox="0 0 24 24">
      <rect x="1" y="1" width="22" height="22" fill="#f4f4f4" stroke="#333" strokeWidth="1.4" />
      <rect x="1" y="1" width="22" height="4" fill="#555" />
      {n === "a" && <path d="M5 9 H16 V18 H5 Z M11 15 L19 22" fill="none" stroke="#3b82a5" strokeWidth="1.4" />}
      {n === "b" && <path d="M5 9 L5 19 M19 9 V19 M8 14 H16" stroke="#333" strokeWidth="1.4" />}
      {n === "c" && <path d="M5 14 H19 M8 10 L4 14 L8 18 M16 10 L20 14 L16 18" fill="none" stroke="#333" strokeWidth="1.4" />}
      {n === "d" && <path d="M17 10 A6 6 0 1 0 18 15 M17 7 V11 H13" fill="none" stroke="#333" strokeWidth="1.4" />}
    </svg>
  );
}

function StatusBlue() {
  return (
    <div className="h-[29px] shrink-0 bg-[#6f99c1] flex items-center text-white">
      <span className="ml-[140px] w-[120px] text-[19px] whitespace-nowrap shrink-0">平面 (拉伸 2)</span>
      <div className="ml-[1735px] flex items-center gap-[10px] shrink-0">
        {sbIcons.map((n) => <SbIcon key={n} n={n} />)}
      </div>
      <div className="ml-[12px] flex items-center shrink-0">
        <div className="w-[24px] h-[24px] rounded-full bg-[#d5dfe6] border-2 border-[#2b6d8b] flex items-center justify-center"><div className="w-[10px] h-[2px] bg-[#5b93ab]" /></div>
        <div className="relative w-[172px] h-[2px] bg-white">
          <svg className="absolute left-[111px] top-[-11px]" width="14" height="24" viewBox="0 0 14 24"><path d="M1 1 H13 V16 L7 23 L1 16 Z" fill="#cfdce5" stroke="#2b6d8b" strokeWidth="1.6" /></svg>
        </div>
        <div className="w-[24px] h-[24px] rounded-full bg-[#d5dfe6] border-2 border-[#2b6d8b] flex items-center justify-center text-[#5b93ab] text-[18px] leading-none">+</div>
        <svg className="ml-[8px]" width="24" height="24" viewBox="0 0 24 24"><circle cx="12" cy="12" r="7" fill="none" stroke="#8a8a8a" strokeWidth="4" /><circle cx="12" cy="12" r="10.5" fill="none" stroke="#8a8a8a" strokeWidth="2.6" strokeDasharray="3.5 3" /></svg>
      </div>
    </div>
  );
}

const lib = [
  "带传动国家标准(GB)(32)", "轴承国家标准(GB)(93)", "螺钉国家标准(GB)(80)", "螺母国家标准(GB)(27)", "螺栓国家标准(GB)(22)",
  "螺柱国家标准(GB)(4)", "铆钉国家标准(GB)(38)", "焊钉国家标准(GB)(2)", "挡圈国家标准(GB)(13)", "垫圈国家标准(GB)(31)",
  "键国家标准(GB)(13)", "销国家标准(GB)(19)", "型材国家标准(GB)(14)", "法兰国家标准（GB）(2)", "其他（GB）(16)",
];

function ThreeD() {
  return (
    <div className="shrink-0 bg-[#e85d12] text-white font-bold rounded-[2px] flex items-center justify-end pr-[2px] border-l-[5px] border-l-[#f6a87a] h-[30px] w-[30px] text-[15px]">3D</div>
  );
}

function RightPanel() {
  const tabs: [string, string][] = [["选型参数", "w-[74px]"], ["搜索结果", "w-[74px]"], ["更多模型", "w-[77px]"]];
  return (
    <div className="w-[341px] shrink-0 flex flex-col border-l-[6px] border-l-[#8a8a8a] h-[1233px]">
      <div className="h-[30px] bg-[#dcdcdc] flex items-center shrink-0 pl-[8px]">
        <ThreeD />
        <span className="ml-[3px] text-[19px] text-[#222]">标准件</span>
        <svg className="ml-auto" width="14" height="13" viewBox="0 0 14 13"><path d="M0 1 H14 M0 5 H14 L7 13 Z" fill="#111" stroke="#111" strokeWidth="1.5" /></svg>
        <svg className="ml-[11px]" width="14" height="18" viewBox="0 0 14 18"><path d="M3 1 H11 V10 H13 V12 H8 V18 H6 V12 H1 V10 H3 Z" fill="#111" /><rect x="5" y="3" width="3" height="7" fill="#dcdcdc" /></svg>
        <svg className="ml-[14px] mr-[12px]" width="13" height="13" viewBox="0 0 13 13"><path d="M1 1 L12 12 M12 1 L1 12" stroke="#111" strokeWidth="2.4" /></svg>
      </div>
      <div className="h-[40px] bg-[#707070] flex shrink-0">
        <div className="w-[42px] bg-[#cfcfcf] border-t-2 border-[#1f4f96] flex items-center justify-center"><ThreeD /></div>
        <div className="w-[46px] bg-[#dcdcdc] flex items-center justify-center">
          <svg width="30" height="30" viewBox="0 0 30 30"><path d="M12 12 L24 28 L28 25 L15 9 Z" fill="#e8a23a" stroke="#8a5a18" /><path d="M2 10 L14 2 L22 6 L18 12 L12 8 L6 14 Z" fill="#d8d8d8" stroke="#555" /></svg>
        </div>
      </div>
      <div className="flex-1 bg-white pl-[11px] pt-[7px] flex flex-col min-h-0">
        <div className="flex gap-[10px] shrink-0">
          <div className="w-[244px] h-[27px] border border-[#8a8a8a] bg-white" />
          <div className="w-[60px] h-[27px] border border-[#8a8a8a] bg-white text-[12px] text-[#333] text-center leading-[25px]">搜索</div>
        </div>
        <div className="flex gap-[5px] mt-[13px] shrink-0">
          <div className="w-[74px] h-[30px] bg-[#fbeee6] border border-[#a8a8a8] border-b-0 text-[12px] text-[#333] text-center leading-[28px]">目录</div>
          {tabs.map(([t, c]) => (
            <div key={t} className={`${c} h-[30px] bg-white border border-[#a8a8a8] border-b-0 text-[12px] text-[#333] text-center leading-[28px]`}>{t}</div>
          ))}
        </div>
        <div className="w-[314px] flex-1 border border-[#9a9a9a] border-t-[#8da7c4] bg-white">
          {lib.map((t) => (
            <div key={t} className="h-[22px] pt-[1px] bg-[linear-gradient(180deg,#a8d1fb_0%,#bcdcff_35%,#b4d8fe_55%,#a5cff9_100%)] border-b border-[#8eb6de] flex items-center text-[12px] text-[#33485c]">
              <svg className="ml-[12px] shrink-0" width="5" height="8" viewBox="0 0 5 8"><path d="M0 0 L5 4 L0 8 Z" fill="#5b6b78" /></svg>
              <span className="ml-[13px] whitespace-pre">{t}</span>
            </div>
          ))}
        </div>
      </div>
    </div>
  );
}

function TaskBar() {
  const Tile = ({ c, children, dot }: { c: string; children: React.ReactNode; dot?: boolean }) => (
    <div className={`${c} relative shrink-0 flex items-center justify-center`}>
      {children}
      {dot && <div className="absolute bottom-[-12px] left-1/2 -translate-x-1/2 w-[5px] h-[5px] rounded-full bg-[#8b8f94]" />}
    </div>
  );
  return (
    <div className="h-[72px] shrink-0 bg-[linear-gradient(90deg,#1a2128_0%,#19222c_35%,#1c2a38_62%,#212121_72%,#202020_84%,#1a2a3a_92%,#1d2126_100%)] border-t-2 border-[#3a3a3a] flex items-center text-white [font-family:'Noto_Sans_CJK_SC','Noto_Sans',sans-serif]">
      <div className="w-[765px] shrink-0 pl-[29px] flex items-center">
        <svg width="42" height="44" viewBox="0 0 42 44">
          <ellipse cx="20" cy="20" rx="12" ry="10" fill="#a0cdf6" />
          <ellipse cx="11" cy="24" rx="9" ry="8" fill="#8bbcf0" />
          <ellipse cx="26" cy="25" rx="10" ry="8" fill="#9fcaf5" />
          <path d="M13 30 Q9 38 13 41 Q17 38 13 30 M23 30 Q19 38 23 42 Q27 38 23 30 M31 30 Q28 36 31 39 Q34 36 31 30" fill="#1d5fe0" />
          <circle cx="28" cy="12" r="11" fill="#f28f96" />
          <text x="25" y="17" fontSize="13" fill="#fff" fontFamily="Liberation Sans, sans-serif">1</text>
        </svg>
        <div className="ml-[5px] flex flex-col text-[17px] leading-[25px] text-[#f2f2f2]">
          <span>29°C</span>
          <span className="text-[#e0e0e0]">大雨</span>
        </div>
      </div>
      <Tile c="w-[35px] h-[35px]">
        <div className="grid grid-cols-2 gap-[1px] w-[35px] h-[35px]">
          <div className="bg-[#63d8fb]" /><div className="bg-[#4ccaf8]" /><div className="bg-[#29b3f6]" /><div className="bg-[#1c9ef5]" />
        </div>
      </Tile>
      <div className="ml-[19px] w-[329px] h-[47px] rounded-full bg-[#3c4045] border border-[#4d5155] flex items-center shrink-0 text-[#d6d6d6]">
        <svg className="ml-[18px]" width="24" height="26" viewBox="0 0 24 26"><circle cx="10" cy="10" r="8" fill="none" stroke="#e6e6e6" strokeWidth="2" /><path d="M16 17 L22 24" stroke="#e6e6e6" strokeWidth="2.4" /></svg>
        <span className="ml-[10px] text-[21px]">搜索</span>
        <svg className="ml-auto mr-[7px]" width="66" height="40" viewBox="0 0 66 40">
          <path d="M6 2 Q2 10 8 20 L14 38 L17 37 L13 18 Q10 8 6 2 Z" fill="#6fa9c8" />
          <path d="M24 8 Q34 -2 46 6 Q50 18 42 28 Q32 30 26 26 Q20 16 24 8 Z" fill="#d9c3ec" />
          <path d="M26 26 Q34 32 42 28 L40 33 Q34 35 28 32 Z" fill="#f4eef8" />
          <ellipse cx="58" cy="12" rx="6" ry="10" fill="none" stroke="#7fb8c2" strokeWidth="1.6" />
          <path d="M57 22 L53 38" stroke="#6fa9a2" strokeWidth="2.6" />
        </svg>
      </div>
      <div className="ml-[27px] w-[30px] h-[42px] relative shrink-0 flex items-start justify-end">
        <div className="w-[26px] h-[30px] rounded-[3px] bg-[#e9e9e9]" />
        <div className="absolute left-0 bottom-0 w-[25px] h-[30px] rounded-[3px] bg-[#6e6e6e]/90" />
      </div>
      <Tile c="ml-[27px] w-[38px] h-[46px]" dot>
        <svg width="38" height="46" viewBox="0 0 38 46"><path d="M1 3 H15 L19 8 H37 V44 H1 Z" fill="#f6c63c" /><path d="M1 3 H15 L19 8 H1 Z" fill="#d99a1a" /><rect x="10" y="26" width="18" height="18" rx="3" fill="#1277d4" /><rect x="15" y="31" width="8" height="2" fill="#cde8fb" /></svg>
      </Tile>
      <Tile c="ml-[30px] w-[34px] h-[36px]">
        <svg width="34" height="36" viewBox="0 0 34 36"><path d="M10 6 V2 H24 V6" fill="none" stroke="#3aa0e0" strokeWidth="2" /><rect x="0" y="5" width="34" height="31" rx="3" fill="#f5f5f5" /><rect x="9" y="12" width="7" height="7" fill="#e7482e" /><rect x="18" y="12" width="7" height="7" fill="#7cb82a" /><rect x="9" y="21" width="7" height="7" fill="#1b9bef" /><rect x="18" y="21" width="7" height="7" fill="#f8b60a" /></svg>
      </Tile>
      <Tile c="ml-[32px] w-[34px] h-[36px]">
        <svg width="34" height="36" viewBox="0 0 34 36"><rect width="34" height="36" rx="7" fill="#1e1e22" /><path d="M6 7 L17 16 L28 7 L25 20 L19 19 V32 H15 V19 L9 20 Z" fill="#7a7a80" /></svg>
      </Tile>
      <Tile c="ml-[34px] w-[31px] h-[36px]">
        <svg width="31" height="36" viewBox="0 0 31 36"><path d="M3 0 H31 V30 L27 36 H0 V3 Z" fill="#13c36f" /><path d="M10 11 Q15 22 21 11" fill="none" stroke="#fff" strokeWidth="2.4" /></svg>
      </Tile>
      <Tile c="ml-[34px] w-[32px] h-[36px]">
        <svg width="32" height="36" viewBox="0 0 32 36"><rect width="32" height="36" rx="4" fill="#0f6ff0" /><path d="M3 24 L10 12 L16 20 L22 12 L29 24 L24 22 L22 26 L16 21 L10 26 L8 22 Z" fill="#fff" /></svg>
      </Tile>
      <Tile c="ml-[32px] w-[36px] h-[36px]">
        <svg width="36" height="36" viewBox="0 0 36 36"><ellipse cx="14" cy="13" rx="13" ry="12" fill="#27c24c" /><path d="M6 22 L5 29 L12 24 Z" fill="#27c24c" /><ellipse cx="25" cy="23" rx="11" ry="10" fill="#e8e8e8" /><circle cx="10" cy="10" r="1.6" fill="#0d5d1f" /><circle cx="18" cy="10" r="1.6" fill="#0d5d1f" /><circle cx="21" cy="21" r="1.4" fill="#666" /><circle cx="28" cy="21" r="1.4" fill="#666" /></svg>
      </Tile>
      <Tile c="ml-[30px] w-[36px] h-[36px]">
        <svg width="36" height="36" viewBox="0 0 36 36"><rect width="36" height="36" rx="6" fill="#fff" /><ellipse cx="18" cy="13" rx="8" ry="10" fill="#111" /><ellipse cx="18" cy="25" rx="9" ry="9" fill="#111" /><ellipse cx="18" cy="26" rx="6" ry="7" fill="#fff" /><circle cx="15" cy="10" r="1.6" fill="#fff" /><circle cx="21" cy="10" r="1.6" fill="#fff" /><path d="M14 14 H22 L18 17 Z" fill="#f5b40f" /><path d="M10 18 H26 L24 21 L23 27 L20 21 H10 Z" fill="#e0251b" /><path d="M9 33 H15 V35 H8 Z M21 33 H27 L28 35 H21 Z" fill="#f5b40f" /></svg>
      </Tile>
      <Tile c="ml-[30px] w-[36px] h-[42px]" dot>
        <svg width="36" height="36" viewBox="0 0 36 36"><circle cx="18" cy="18" r="18" fill="#1a7fc9" /><path d="M2 18 A16 16 0 0 1 34 16 Q34 26 26 26 Q20 26 20 20 Q26 18 22 12 Q14 8 8 14 Q2 20 2 18 Z" fill="#35c6a0" /><path d="M18 34 Q8 32 6 22 Q12 30 22 30 Q28 30 34 24 Q30 34 18 34 Z" fill="#0c4f98" /></svg>
      </Tile>
      <div className="ml-[19px] w-[57px] h-[62px] bg-[#2b2f35] rounded-[6px] relative flex items-center justify-center shrink-0 border-r-2 border-[#3a3e44]">
        <div className="w-[36px] h-[36px] bg-white rounded-[6px] flex items-center justify-center">
          <AppLogo s={32} />
        </div>
        <div className="absolute bottom-[2px] left-[17px] w-[25px] h-[5px] rounded-full bg-[#4cc2ff]" />
      </div>
      <svg className="ml-[343px] shrink-0" width="16" height="10" viewBox="0 0 16 10"><path d="M2 9 L8 2 L14 9" fill="none" stroke="#f0f0f0" strokeWidth="1.6" /></svg>
      <svg className="ml-[29px] shrink-0" width="26" height="28" viewBox="0 0 26 28"><ellipse cx="11" cy="9" rx="8" ry="8" fill="#c0c0c0" /><ellipse cx="8" cy="17" rx="7" ry="7" fill="#a8a8a8" /><circle cx="17" cy="20" r="7" fill="#2a2a2a" stroke="#d9ebf5" strokeWidth="2" /><circle cx="17" cy="20" r="3" fill="#5aaee0" /></svg>
      <span className="ml-[23px] w-[20px] text-[20px] text-[#f2f2f2] shrink-0">英</span>
      <svg className="ml-[29px] shrink-0" width="24" height="26" viewBox="0 0 24 26"><path d="M2 9 Q12 0 22 9 M6 13 Q12 7 18 13 M9 17 Q12 14 15 17" fill="none" stroke="#f4f4f4" strokeWidth="2" /><circle cx="12" cy="22" r="2" fill="#f4f4f4" /></svg>
      <svg className="ml-[13px] shrink-0" width="22" height="26" viewBox="0 0 22 26"><path d="M1 9 H5 L12 3 V23 L5 17 H1 Z" fill="none" stroke="#f4f4f4" strokeWidth="1.6" /><path d="M15 8 Q18 13 15 18 M18 5 Q23 13 18 21" fill="none" stroke="#f4f4f4" strokeWidth="1.6" /></svg>
      <svg className="ml-[14px] shrink-0" width="24" height="26" viewBox="0 0 24 26"><rect x="3" y="8" width="16" height="14" rx="2" fill="none" stroke="#f4f4f4" strokeWidth="2" /><rect x="19" y="12" width="3" height="6" fill="#f4f4f4" /><path d="M9 1 L6 10 H12 L9 17" fill="#1d2126" stroke="#f4f4f4" strokeWidth="1.4" /><rect x="5" y="10" width="9" height="10" fill="#e8e8e8" /></svg>
      <div className="w-[108px] shrink-0 flex flex-col items-end text-[17px] leading-[25px] text-[#f2f2f2]">
        <span>14:19</span>
        <span>2024/8/14</span>
      </div>
      <svg className="ml-[13px] shrink-0" width="20" height="28" viewBox="0 0 20 28"><path d="M10 1 Q4 2 4 10 L2 20 H18 L16 10 Q16 2 10 1 Z" fill="#8fd4f4" /><path d="M7 22 Q10 27 13 22 Z" fill="#c9eafa" /></svg>
    </div>
  );
}

export default function App() {
  return (
    <div className="w-[2559px] h-[1599px] overflow-hidden flex flex-col bg-[#dcdcdc] [font-family:'Noto_Sans_CJK_SC','Noto_Sans',sans-serif]">
      <TitleBar />
      <Ribbon />
      <ToolBand />
      <div className="h-[1233px] flex shrink-0">
        <div className="w-[2218px] shrink-0 flex flex-col">
          <div className="h-[36px] shrink-0 flex items-end pl-[3px]">
            <div className="w-[183px] h-[34px] bg-[#6f99c1] flex items-center text-white text-[18px] border-r border-[#5c7f9f]">
              <svg className="ml-[20px]" width="14" height="17" viewBox="0 0 14 17"><path d="M1 1 H10 L13 4 V16 H1 Z" fill="#e8e8e8" /><rect x="1" y="6" width="8" height="8" fill="#2a86d8" /></svg>
              <span className="ml-[4px]">手机模型.par</span>
              <svg className="ml-auto mr-[5px]" width="13" height="13" viewBox="0 0 13 13"><path d="M1 1 L12 12 M12 1 L1 12" stroke="#fff" strokeWidth="2.2" /></svg>
            </div>
            <div className="ml-auto flex items-center h-[34px] pr-[4px] gap-[10px]">
              <svg width="7" height="13" viewBox="0 0 7 13"><path d="M6 1 L1 6.5 L6 12 Z" fill="#dcdcdc" stroke="#111" /></svg>
              <svg className="ml-[3px]" width="7" height="13" viewBox="0 0 7 13"><path d="M1 1 L6 6.5 L1 12 Z" fill="#dcdcdc" stroke="#111" /></svg>
              <svg width="12" height="7" viewBox="0 0 12 7"><path d="M0 0 H12 L6 7 Z" fill="#111" /></svg>
              <svg width="15" height="15" viewBox="0 0 15 15"><path d="M1 1 L14 14 M14 1 L1 14" stroke="#111" strokeWidth="3" /></svg>
            </div>
          </div>
          <div className="h-[1158px] flex shrink-0">
            <Finder />
            <div className="flex-1 min-w-0 bg-[linear-gradient(160deg,#ffffff_2%,#eceef7_30%,#dfe2f1_52%,#eaecf6_72%,#ffffff_100%)] border-t border-[#6f99c1]">
              <Model />
            </div>
          </div>
          <div className="h-[7px] shrink-0 bg-[#c4c4c4] border-y-2 border-[#6b6b6b]" />
          <div className="h-[32px] shrink-0 flex items-center bg-[#dcdcdc]">
            <svg className="ml-[8px] shrink-0" width="48" height="26" viewBox="0 0 48 26"><rect x="1" y="1" width="46" height="24" fill="#d8e8f4" stroke="#2b5d8b" strokeWidth="2" /><rect x="1" y="1" width="46" height="7" fill="#4d8a9b" /><rect x="4" y="13" width="15" height="7" fill="#fff" stroke="#234" /><rect x="23" y="13" width="11" height="7" fill="#fff" stroke="#234" /><rect x="38" y="13" width="7" height="7" fill="#fff" stroke="#234" /></svg>
            <div className="ml-[16px] w-px h-[30px] bg-[#b8b8b8]" />
            <span className="ml-[2px] text-[20px] tracking-[0.35px] text-[#111] whitespace-pre">单击某个平的面或参考平面。方向键: n = 下一步， b = 上一步， t = 切换， f = 翻转， p = 基准平面</span>
            <div className="ml-auto w-[27px] h-full bg-[#f0f0f0]" />
          </div>
        </div>
        <RightPanel />
      </div>
      <div className="h-px bg-white shrink-0" />
      <StatusBlue />
      <TaskBar />
    </div>
  );
}
